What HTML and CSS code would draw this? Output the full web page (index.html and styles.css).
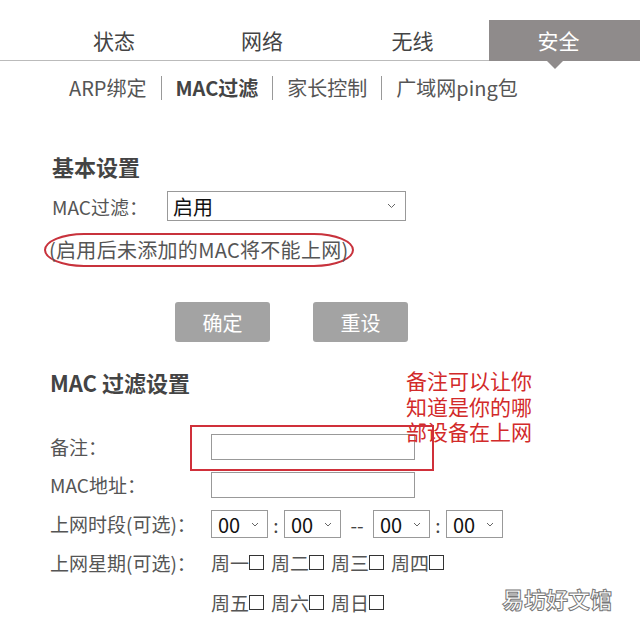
FILE: index.html
```html
<!DOCTYPE html>
<html lang="zh-CN">
<head>
<meta charset="utf-8">
<title>MAC过滤</title>
<link rel="stylesheet" href="styles.css">
</head>
<body>
<div class="page">
  <nav class="tabs">
    <div class="tab t1">状态</div>
    <div class="tab t2">网络</div>
    <div class="tab t3">无线</div>
    <div class="tab active">安全</div>
  </nav>
  <div class="subnav">
    <span class="sub">ARP绑定</span>
    <span class="sub current">MAC过滤</span>
    <span class="sub">家长控制</span>
    <span class="sub">广域网ping包</span>
  </div>

  <section class="basic">
    <h2 class="title">基本设置</h2>
    <div class="row-filter">
      <span class="label-filter">MAC过滤：</span>
      <div class="select big">
        <span>启用</span>
        <svg class="chev" width="9" height="6" viewBox="0 0 9 6"><path d="M1 1 L4.5 4.5 L8 1" fill="none" stroke="#666" stroke-width="1"/></svg>
      </div>
    </div>
    <div class="note">(启用后未添加的MAC将不能上网)</div>
    <div class="buttons">
      <button class="btn">确定</button>
      <button class="btn">重设</button>
    </div>
  </section>

  <section class="filter">
    <h2 class="title">MAC 过滤设置</h2>
    <div class="form">
      <div class="label">备注：</div>
      <div class="input"></div>
      <div class="label">MAC地址：</div>
      <div class="input"></div>
      <div class="label">上网时段(可选)：</div>
      <div class="times">
        <div class="select small"><span>00</span><svg class="chev" width="8" height="5" viewBox="0 0 8 5"><path d="M1 1 L4 4 L7 1" fill="none" stroke="#666" stroke-width="1"/></svg></div>
        <span class="sep">:</span>
        <div class="select small"><span>00</span><svg class="chev" width="8" height="5" viewBox="0 0 8 5"><path d="M1 1 L4 4 L7 1" fill="none" stroke="#666" stroke-width="1"/></svg></div>
        <span class="sep dash">--</span>
        <div class="select small"><span>00</span><svg class="chev" width="8" height="5" viewBox="0 0 8 5"><path d="M1 1 L4 4 L7 1" fill="none" stroke="#666" stroke-width="1"/></svg></div>
        <span class="sep">:</span>
        <div class="select small"><span>00</span><svg class="chev" width="8" height="5" viewBox="0 0 8 5"><path d="M1 1 L4 4 L7 1" fill="none" stroke="#666" stroke-width="1"/></svg></div>
      </div>
      <div class="label top">上网星期(可选)：</div>
      <div class="days">
        <div class="day-row">
          <span class="day">周一<i class="box"></i></span>
          <span class="day">周二<i class="box"></i></span>
          <span class="day">周三<i class="box"></i></span>
          <span class="day">周四<i class="box"></i></span>
        </div>
        <div class="day-row second">
          <span class="day">周五<i class="box"></i></span>
          <span class="day">周六<i class="box"></i></span>
          <span class="day">周日<i class="box"></i></span>
        </div>
      </div>
    </div>
  </section>

  <div class="annot">
    <div class="aline">备注可以让你</div>
    <div class="aline">知道是你的哪</div>
    <div class="aline">部设备在上网</div>
  </div>
  <div class="redbox"></div>
  <div class="watermark">易坊好文馆</div>
</div>
</body>
</html>
```

FILE: styles.css
```css
html, body {
  margin: 0;
  padding: 0;
  background: #fff;
}
body {
  font-family: "Noto Sans CJK SC", "Noto Sans", sans-serif;
  color: #555;
}
.page {
  position: relative;
  width: 640px;
  height: 631px;
  overflow: hidden;
}
.tabs {
  display: flex;
  height: 40px;
  padding: 20px 0 0 40px;
  border-bottom: 1px solid #bbb;
}
.tab {
  height: 40px;
  line-height: 40px;
  font-size: 21px;
  color: #444;
  text-align: center;
}
.t1, .t2 { width: 148px; }
.t3 { width: 153px; }
.tab.active {
  position: relative;
  flex: 1;
  height: 41px;
  margin-bottom: -1px;
  padding-right: 12px;
  background: #8f8b8b;
  color: #fff;
}
.tab.active::after {
  content: "";
  position: absolute;
  left: 58px;
  top: 41px;
  border-left: 8px solid transparent;
  border-right: 8px solid transparent;
  border-top: 8px solid #8f8b8b;
}
.subnav {
  display: flex;
  align-items: center;
  margin-top: 15px;
  padding-left: 55px;
  height: 24px;
}
.sub {
  padding: 0 14px;
  font-size: 20px;
  line-height: 24px;
  color: #555;
}
.sub + .sub {
  border-left: 1px solid #999;
}
.sub.current {
  font-weight: bold;
  color: #444;
}
.basic {
  padding-left: 52px;
  margin-top: 52px;
}
.title {
  margin: 0;
  font-size: 22px;
  line-height: 28px;
  font-weight: bold;
  color: #444;
}
.row-filter {
  display: flex;
  align-items: center;
  margin-top: 11px;
}
.label-filter {
  width: 115px;
  font-size: 19px;
}
.select {
  display: flex;
  align-items: center;
  justify-content: space-between;
  box-sizing: border-box;
  border: 1px solid #999;
  background: #fff;
  color: #111;
}
.select.big {
  width: 239px;
  height: 30px;
  padding: 0 9px 0 5px;
  font-size: 20px;
}
.note {
  display: inline-block;
  margin: 12px 0 0 -8px;
  padding: 0 3px;
  height: 30px;
  line-height: 30px;
  font-size: 20px;
  letter-spacing: 0.3px;
  border: 2px solid #c8323c;
  border-radius: 40px / 50%;
  color: #555;
}
.buttons {
  display: flex;
  gap: 43px;
  margin: 35px 0 0 123px;
}
.btn {
  width: 95px;
  height: 40px;
  border: none;
  border-radius: 3px;
  background: #a3a3a3;
  color: #fff;
  font-family: inherit;
  font-size: 20px;
  padding: 0;
}
.filter {
  padding-left: 50px;
  margin-top: 26px;
}
.form {
  display: grid;
  grid-template-columns: 161px auto;
  row-gap: 12px;
  align-items: center;
  margin-top: 38px;
}
.label {
  font-size: 19px;
  line-height: 26px;
  white-space: nowrap;
}
.label.top {
  align-self: start;
}
.input {
  width: 204px;
  height: 26px;
  box-sizing: border-box;
  border: 1px solid #999;
}
.times {
  display: flex;
  align-items: center;
}
.select.small {
  width: 57px;
  height: 28px;
  padding: 0 8px 0 6px;
  font-size: 20px;
}
.sep {
  width: 16px;
  text-align: center;
  font-size: 19px;
  color: #444;
}
.sep.dash {
  width: 32px;
}
.day-row {
  display: flex;
  gap: 7px;
  font-size: 19px;
  line-height: 26px;
}
.day-row.second {
  margin-top: 14px;
}
.day {
  display: inline-flex;
  align-items: center;
}
.box {
  display: block;
  flex: none;
  width: 15px;
  height: 15px;
  box-sizing: border-box;
  border: 1px solid #333;
  margin-left: 0;
  margin-top: -2px;
}
.annot {
  position: absolute;
  left: 406px;
  top: 368px;
  color: #d22a2a;
}
.aline {
  font-size: 21px;
  line-height: 25px;
  height: 25.5px;
}
.redbox {
  position: absolute;
  left: 190px;
  top: 425px;
  width: 244px;
  height: 46px;
  box-sizing: border-box;
  border: 2px solid #d0303a;
}
.watermark {
  position: absolute;
  left: 502px;
  top: 582px;
  font-size: 22px;
  line-height: 32px;
  font-weight: bold;
  color: #fff;
  -webkit-text-stroke: 1px #777;
}
```
